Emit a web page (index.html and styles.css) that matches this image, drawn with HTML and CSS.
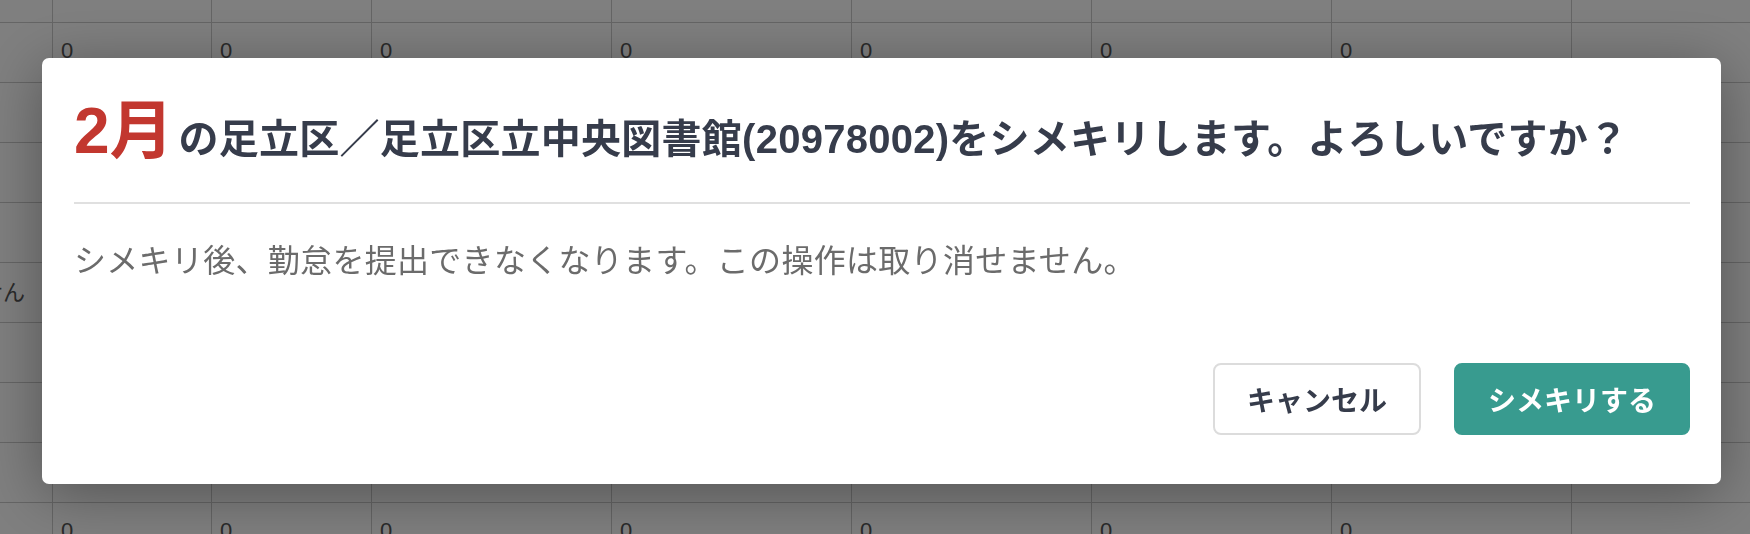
FILE: index.html
```html
<!DOCTYPE html>
<html lang="ja">
<head>
<meta charset="utf-8">
<title>シメキリ確認</title>
<link rel="stylesheet" href="styles.css">
</head>
<body>
<div class="sheet">
  <div class="row"><div class="cell"></div><div class="cell">0</div><div class="cell">0</div><div class="cell">0</div><div class="cell">0</div><div class="cell">0</div><div class="cell">0</div><div class="cell">0</div><div class="cell"></div></div>
  <div class="row"><div class="cell"></div><div class="cell">0</div><div class="cell">0</div><div class="cell">0</div><div class="cell">0</div><div class="cell">0</div><div class="cell">0</div><div class="cell">0</div><div class="cell"></div></div>
  <div class="row"><div class="cell"></div><div class="cell">0</div><div class="cell">0</div><div class="cell">0</div><div class="cell">0</div><div class="cell">0</div><div class="cell">0</div><div class="cell">0</div><div class="cell"></div></div>
  <div class="row"><div class="cell"></div><div class="cell">0</div><div class="cell">0</div><div class="cell">0</div><div class="cell">0</div><div class="cell">0</div><div class="cell">0</div><div class="cell">0</div><div class="cell"></div></div>
  <div class="row"><div class="cell"></div><div class="cell">0</div><div class="cell">0</div><div class="cell">0</div><div class="cell">0</div><div class="cell">0</div><div class="cell">0</div><div class="cell">0</div><div class="cell"></div></div>
  <div class="row"><div class="cell name"><span class="clip">せん</span></div><div class="cell">0</div><div class="cell">0</div><div class="cell">0</div><div class="cell">0</div><div class="cell">0</div><div class="cell">0</div><div class="cell">0</div><div class="cell"></div></div>
  <div class="row"><div class="cell"></div><div class="cell">0</div><div class="cell">0</div><div class="cell">0</div><div class="cell">0</div><div class="cell">0</div><div class="cell">0</div><div class="cell">0</div><div class="cell"></div></div>
  <div class="row"><div class="cell"></div><div class="cell">0</div><div class="cell">0</div><div class="cell">0</div><div class="cell">0</div><div class="cell">0</div><div class="cell">0</div><div class="cell">0</div><div class="cell"></div></div>
  <div class="row"><div class="cell"></div><div class="cell">0</div><div class="cell">0</div><div class="cell">0</div><div class="cell">0</div><div class="cell">0</div><div class="cell">0</div><div class="cell">0</div><div class="cell"></div></div>
  <div class="row"><div class="cell"></div><div class="cell">0</div><div class="cell">0</div><div class="cell">0</div><div class="cell">0</div><div class="cell">0</div><div class="cell">0</div><div class="cell">0</div><div class="cell"></div></div>
</div>

<div class="overlay">
  <div class="modal" role="dialog" aria-modal="true">
    <div class="modal-header">
      <h1 class="modal-title"><span class="month">2月</span>の足立区／足立区立中央図書館(20978002)をシメキリします。よろしいですか？</h1>
    </div>
    <p class="modal-body">シメキリ後、勤怠を提出できなくなります。この操作は取り消せません。</p>
    <div class="modal-footer">
      <button class="btn btn-cancel" type="button">キャンセル</button>
      <button class="btn btn-primary" type="button">シメキリする</button>
    </div>
  </div>
</div>
</body>
</html>
```

FILE: styles.css
```css
* {
  box-sizing: border-box;
}

html, body {
  margin: 0;
  height: 534px;
  overflow: hidden;
}

body {
  background: #ffffff;
  font-family: "Liberation Sans", "Noto Sans CJK JP", sans-serif;
}

/* background spreadsheet */
.sheet {
  margin-top: -38px;
}

.row {
  display: grid;
  grid-template-columns: 52px 159px 160px 240px 240px 240px 240px 240px 1fr;
  height: 60px;
  border-top: 1px solid #cbcbcb;
}

.cell {
  border-left: 1px solid #cbcbcb;
  padding-left: 8px;
  font-size: 22px;
  line-height: 55px;
  color: #555555;
  overflow: hidden;
  white-space: nowrap;
}

.cell:first-child {
  border-left: none;
  padding-left: 0;
}

.name {
  font-family: "Noto Sans CJK JP", sans-serif;
  font-size: 22px;
}

.clip {
  display: inline-block;
  margin-left: -19px;
}

/* overlay + modal */
.overlay {
  position: fixed;
  inset: 0;
  background: rgba(0, 0, 0, 0.5);
  padding: 58px 0 0 42px;
}

.modal {
  width: 1679px;
  background: #ffffff;
  border-radius: 7px;
  padding: 28px 31px 49px 32px;
  box-shadow: 0 10px 60px rgba(0, 0, 0, 0.35);
}

.modal-header {
  padding-bottom: 18px;
  border-bottom: 2px solid #e0e0e0;
}

.modal-title {
  margin: 0;
  font-size: 40px;
  font-weight: 700;
  line-height: 90px;
  letter-spacing: 0.25px;
  color: #363c4b;
  white-space: nowrap;
}

.month {
  font-size: 64px;
  letter-spacing: 0;
  color: #c2372f;
  margin-right: 5px;
}

.modal-body {
  margin: 30px 0 0;
  font-family: "Noto Sans CJK JP", sans-serif;
  font-size: 32px;
  letter-spacing: 0.3px;
  line-height: 48px;
  color: #6b6b6b;
}

.modal-footer {
  margin-top: 81px;
  display: flex;
  justify-content: flex-end;
  gap: 33px;
}

.btn {
  height: 72px;
  padding: 0 32px;
  border-radius: 8px;
  border: 2px solid transparent;
  font-family: "Noto Sans CJK JP", sans-serif;
  font-size: 28px;
  font-weight: 700;
  line-height: 68px;
  cursor: pointer;
}

.btn-cancel {
  background: #ffffff;
  border-color: #dcdcdc;
  color: #363c4b;
}

.btn-primary {
  background: #389b8f;
  border-color: #389b8f;
  color: #ffffff;
}
```
